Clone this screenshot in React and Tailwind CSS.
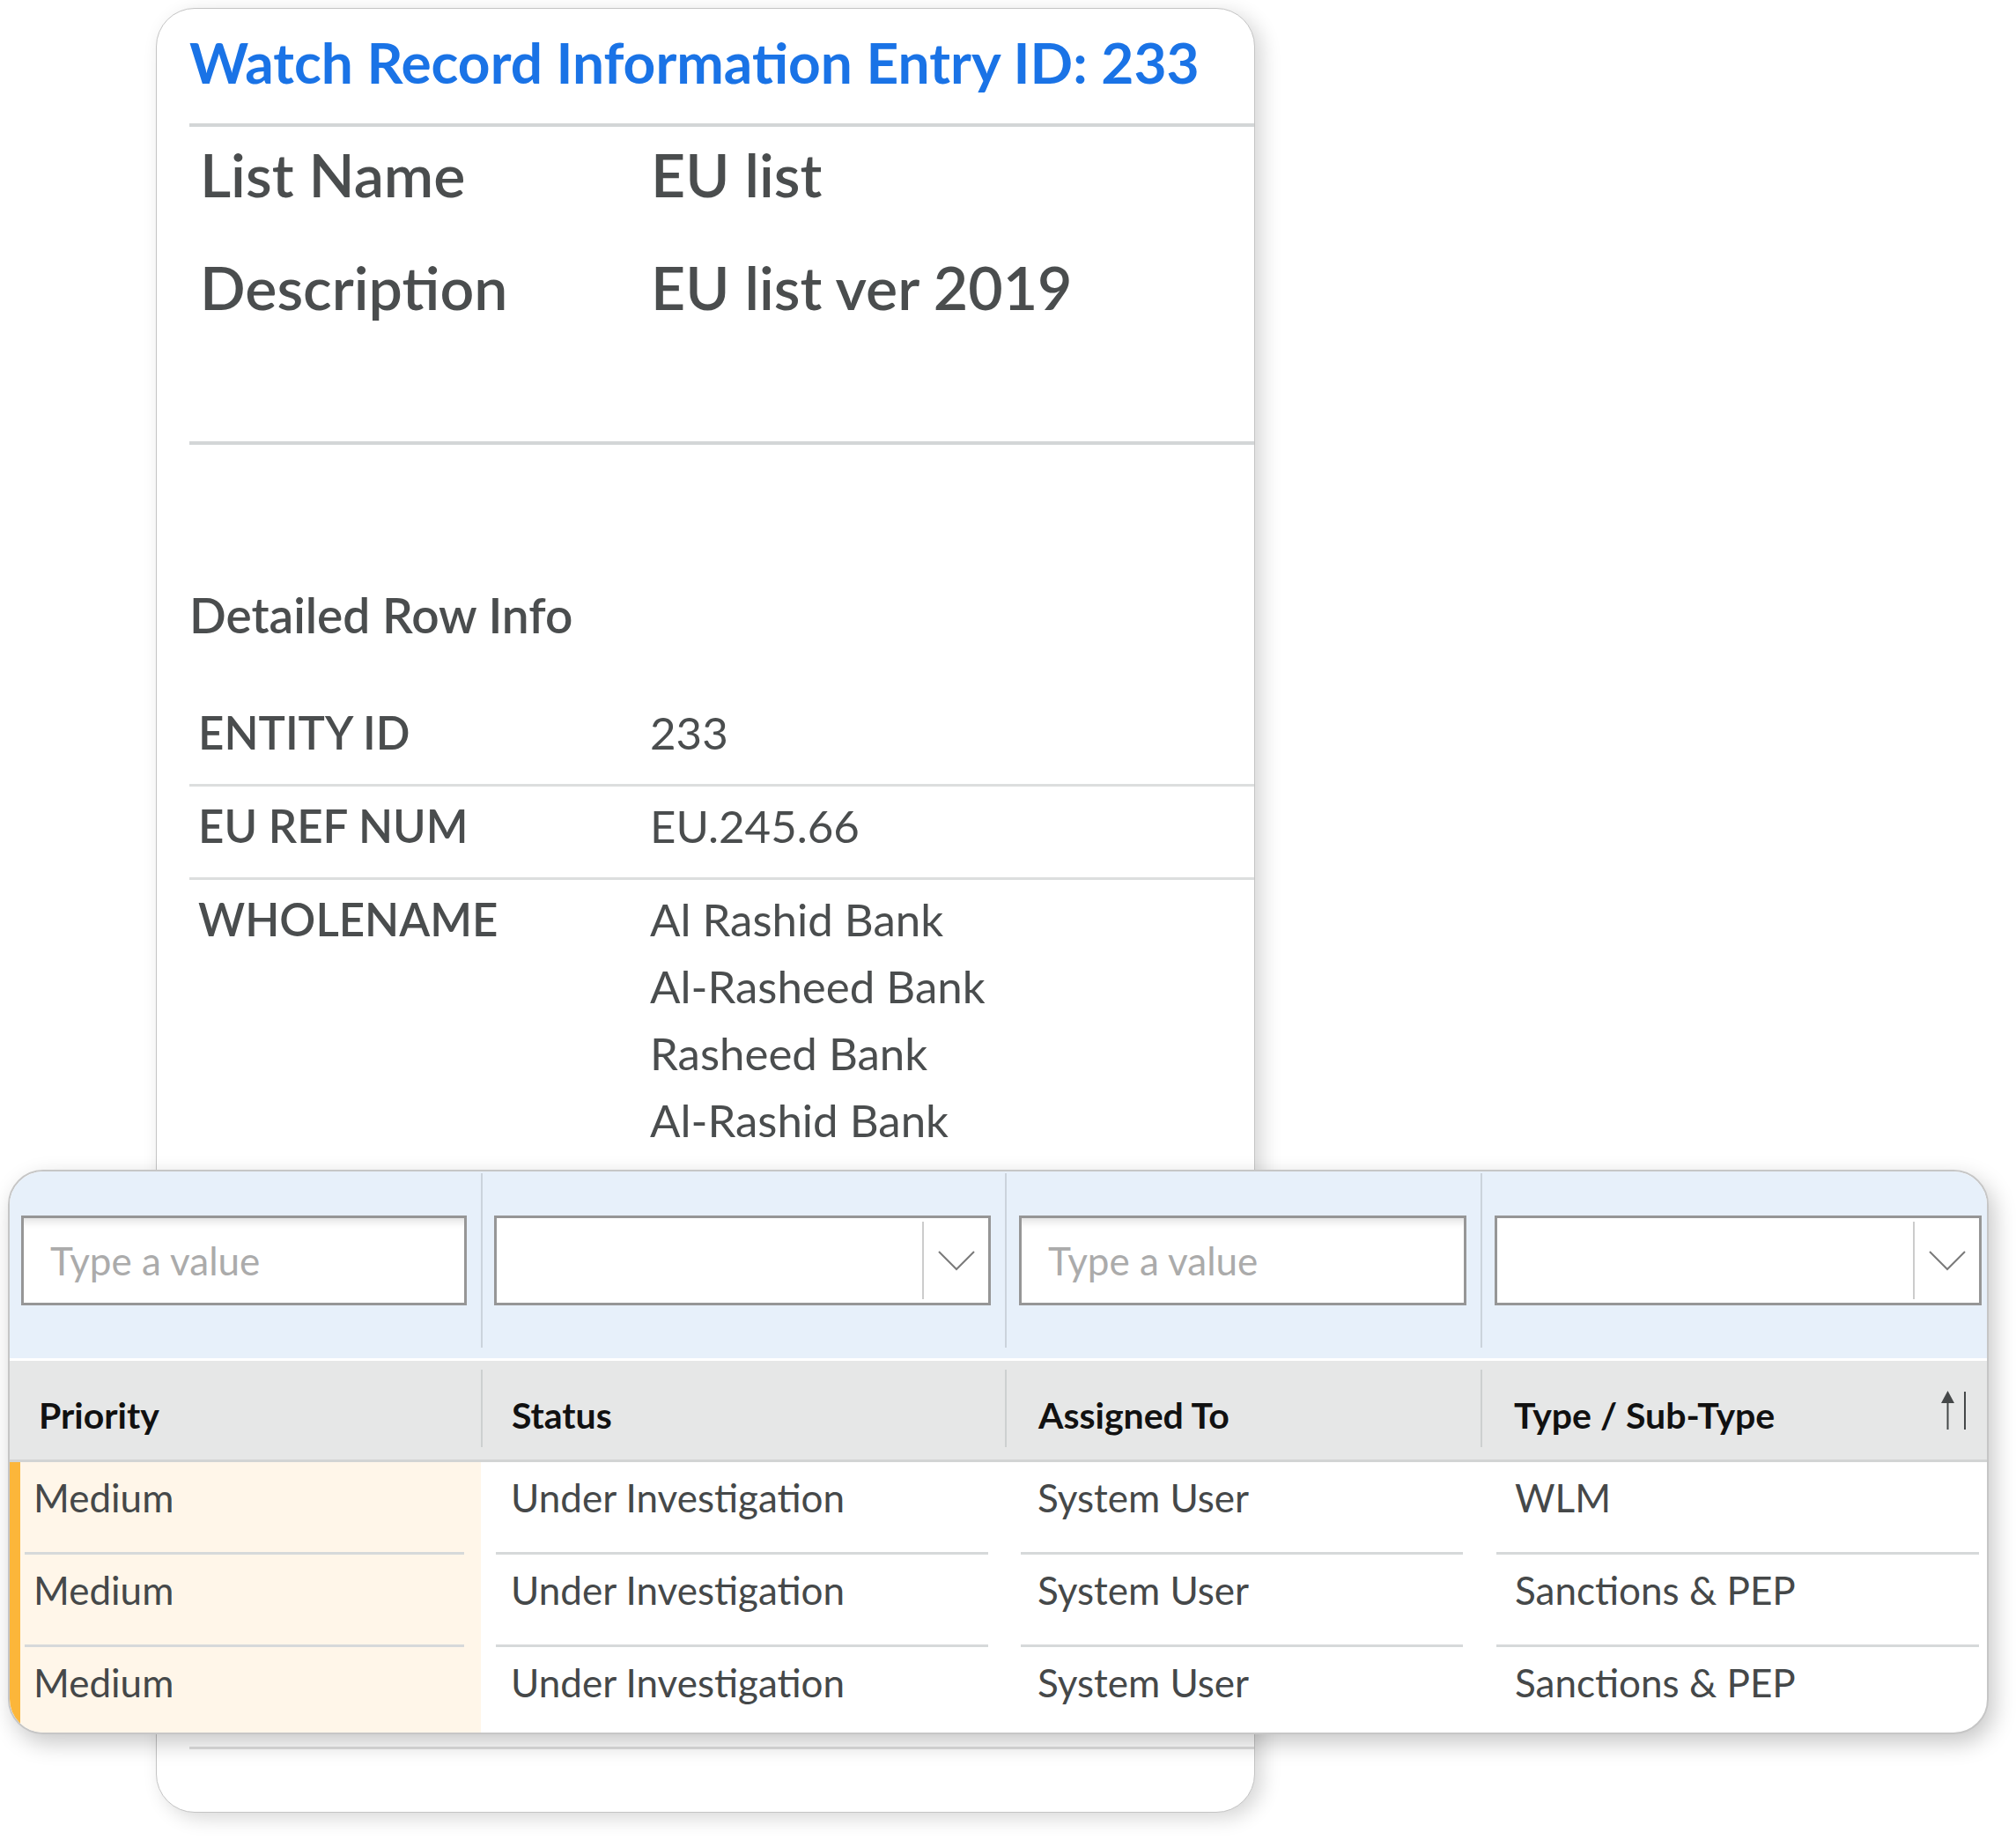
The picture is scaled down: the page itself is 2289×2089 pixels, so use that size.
import React from 'react';

const cols = [
  { w: 'w-[535px]', fpad: 'pl-[13px] pr-[16px]', hpad: 'pl-[33px]' },
  { w: 'w-[593px]', fpad: 'pl-[13px] pr-[16px]', hpad: 'pl-[33px]' },
  { w: 'w-[538px]', fpad: 'pl-[14px] pr-[16px]', hpad: 'pl-[36px]' },
  { w: 'w-[573px]', fpad: 'pl-[14px] pr-[6px]', hpad: 'pl-[36px] pr-[23px]' },
];

const rows = [
  ['Medium', 'Under Investigation', 'System User', 'WLM'],
  ['Medium', 'Under Investigation', 'System User', 'Sanctions & PEP'],
  ['Medium', 'Under Investigation', 'System User', 'Sanctions & PEP'],
];

const Chevron = () => (
  <svg width="42" height="23" viewBox="0 0 42 23" fill="none">
    <polyline points="1,1 21,21 41,1" stroke="#7a7a7a" strokeWidth="2" />
  </svg>
);

const SortIcon = () => (
  <svg width="29" height="45" viewBox="0 0 29 45" fill="none">
    <polygon points="0,14 7.5,0 15,14" fill="#454849" />
    <line x1="7.5" y1="12" x2="7.5" y2="44" stroke="#454849" strokeWidth="2" />
    <line x1="27" y1="1" x2="27" y2="44" stroke="#454849" strokeWidth="2" />
  </svg>
);

const TextFilter = () => (
  <div className="h-[102px] border-[3px] border-[#969696] bg-white shadow-[inset_0_12px_10px_-8px_rgba(0,0,0,0.12)] flex items-center pl-[30px] text-[44px] text-[#ababab]">
    Type a value
  </div>
);

const SelectFilter = () => (
  <div className="h-[102px] border-[3px] border-[#969696] bg-white flex justify-end">
    <div className="w-[2px] my-[4px] bg-[#cccccc]" />
    <div className="w-[73px] flex items-center justify-center">
      <Chevron />
    </div>
  </div>
);

const FilterDivider = () => <div className="w-[2px] mt-[2px] mb-[12px] bg-[#cbd3dc]" />;
const HeaderDivider = () => <div className="w-[2px] mt-[10px] mb-[14px] bg-[#cdd0d0]" />;

const App = () => {
  const headers = ['Priority', 'Status', 'Assigned To', 'Type / Sub-Type'];
  const bodyPad = [
    'ml-[5px] mr-[19px] pl-[10px]',
    'ml-[15px] mr-[19px] pl-[17px]',
    'ml-[16px] mr-[20px] pl-[19px]',
    'ml-[16px] mr-[9px] pl-[21px]',
  ];

  return (
    <div className="relative w-[2289px] h-[2089px] bg-white pt-[9px] pl-[177px] font-[Lato,sans-serif] overflow-hidden">
      {/* record card */}
      <div className="w-[1248px] h-[2049px] rounded-[44px] border border-[#c4c4c4] bg-white shadow-[8px_6px_22px_rgba(0,0,0,0.16)] pl-[37px] flex flex-col">
        <h1 className="mt-[29px] text-[64px] leading-none font-bold text-[#1a73e6]">
          Watch Record Information Entry ID: 233
        </h1>
        <div className="mt-[37px] h-[4px] bg-[#d3d6d7]" />
        <div className="mt-[20px] grid grid-cols-[524px_1fr] gap-y-[60px] text-[68px] leading-none font-semibold text-[#4a4d4e]">
          <div className="pl-[12px]">List Name</div>
          <div>EU list</div>
          <div className="pl-[12px]">Description</div>
          <div>EU list ver 2019</div>
        </div>
        <div className="mt-[141px] h-[4px] bg-[#d3d6d7]" />
        <h2 className="mt-[166px] text-[55px] leading-none font-semibold text-[#4a4d4e]">Detailed Row Info</h2>
        <div className="mt-[68px] text-[51px] leading-[76px] text-[#4a4d4e]">
          <div className="grid grid-cols-[523px_1fr] pb-[20px] border-b-[3px] border-[#dcdede]">
            <div className="pl-[10px] font-semibold">ENTITY ID</div>
            <div>233</div>
          </div>
          <div className="grid grid-cols-[523px_1fr] pt-[7px] pb-[20px] border-b-[3px] border-[#dcdede]">
            <div className="pl-[10px] font-semibold">EU REF NUM</div>
            <div>EU.245.66</div>
          </div>
          <div className="grid grid-cols-[523px_1fr] pt-[7px]">
            <div className="pl-[10px] font-semibold">WHOLENAME</div>
            <div className="flex flex-col">
              <span>Al Rashid Bank</span>
              <span>Al-Rasheed Bank</span>
              <span>Rasheed Bank</span>
              <span>Al-Rashid Bank</span>
            </div>
          </div>
        </div>
        <div className="mt-auto mb-[71px] h-[3px] bg-[#dedede]" />
      </div>

      {/* alerts grid laid over the card */}
      <div className="absolute left-[9px] top-[1328px] w-[2249px] h-[641px] rounded-[40px] border-2 border-[#c6c6c6] bg-white overflow-hidden shadow-[6px_10px_26px_rgba(0,0,0,0.22)]">
        <div className="flex h-[215px] bg-[#e7f0fa] border-b-[3px] border-white">
          {cols.map((c, i) => (
            <React.Fragment key={i}>
              {i > 0 && <FilterDivider />}
              <div className={`${c.w} ${c.fpad} pt-[50px]`}>
                {i % 2 === 0 ? <TextFilter /> : <SelectFilter />}
              </div>
            </React.Fragment>
          ))}
        </div>

        <div className="flex h-[115px] bg-[#e6e7e7] border-b-[3px] border-[#d2d4d4]">
          {cols.map((c, i) => (
            <React.Fragment key={i}>
              {i > 0 && <HeaderDivider />}
              <div className={`${c.w} ${c.hpad} flex items-center justify-between`}>
                <span className="mt-[10px] text-[41px] leading-none font-bold text-[#111111]">{headers[i]}</span>
                {i === 3 && <SortIcon />}
              </div>
            </React.Fragment>
          ))}
        </div>

        {rows.map((r, ri) => (
          <div key={ri} className="flex h-[105px] text-[44px] leading-none text-[#454849]">
            {r.map((cell, ci) => (
              <React.Fragment key={ci}>
                {ci > 0 && <div className="w-[2px]" />}
                <div className={`${cols[ci].w} ${ci === 0 ? 'bg-[#fff6e9] border-l-[12px] border-[#fcb63a]' : ''}`}>
                  <div className={`${bodyPad[ci]} h-full pt-[18px] ${ri < rows.length - 1 ? 'border-b-[3px] border-[#d6d9da]' : ''}`}>
                    {cell}
                  </div>
                </div>
              </React.Fragment>
            ))}
          </div>
        ))}
      </div>
    </div>
  );
};

export default App;
